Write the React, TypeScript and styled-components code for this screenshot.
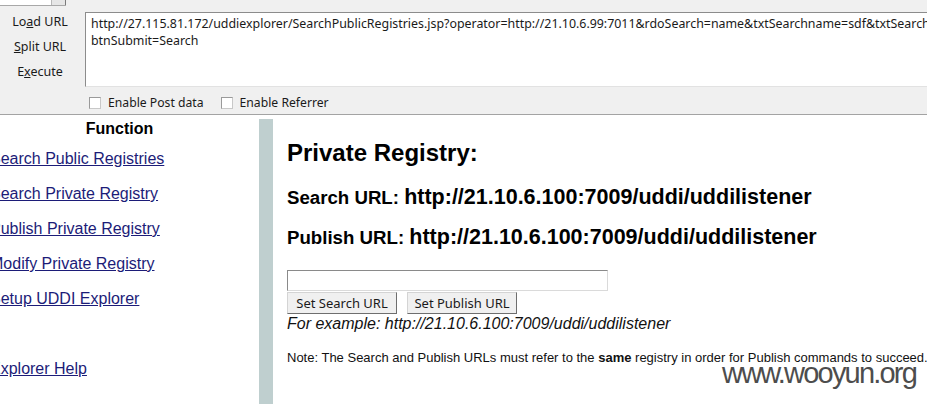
import React from "react";
import styled, { createGlobalStyle } from "styled-components";

const GlobalStyle = createGlobalStyle`
  html, body { margin: 0; padding: 0; }
  body {
    width: 927px;
    height: 404px;
    overflow: hidden;
    background: #ffffff;
    font-family: "Liberation Sans", Arial, sans-serif;
  }
  #root { width: 927px; height: 404px; }
`;

const Page = styled.div`
  position: relative;
  width: 927px;
  height: 404px;
  overflow: hidden;
  display: flex;
  flex-direction: column;
  background: #fff;
`;

const Toolbar = styled.div`
  height: 114px;
  flex: 0 0 auto;
  display: flex;
  background: #f0f0f0;
  border-bottom: 1px solid #a3a3a3;
  font-family: "Noto Sans", "Liberation Sans", sans-serif;
  color: #1a1a1a;
`;

const ActionCol = styled.div`
  width: 80px;
  flex: 0 0 80px;
  display: flex;
  flex-direction: column;
`;

const TopCombo = styled.div`
  width: 66px;
  height: 5px;
  background: #ffffff;
  border-bottom: 1px solid #a8a8a8;
  display: flex;
  justify-content: flex-end;
`;

const ComboButton = styled.div`
  width: 15px;
  height: 5px;
  background: #e6e6e6;
  border-left: 1px solid #b8b8b8;
  border-right: 1px solid #7a7a7a;
  box-sizing: border-box;
`;

const ActionList = styled.div`
  margin-top: 3px;
  display: flex;
  flex-direction: column;
`;

const ActionButton = styled.div`
  height: 25px;
  line-height: 25px;
  font-size: 12.5px;
  text-align: center;
  white-space: nowrap;
`;

const Accel = styled.span`
  text-decoration: underline;
`;

const EditorCol = styled.div`
  flex: 1 1 auto;
  margin-left: 5px;
  padding-top: 12px;
  display: flex;
  flex-direction: column;
  min-width: 0;
`;

const UrlBox = styled.textarea`
  display: block;
  box-sizing: border-box;
  width: 100%;
  height: 75px;
  margin: 0;
  padding: 2px 0 0 5px;
  border: 1px solid #8c8c8c;
  border-right: none;
  border-bottom-color: #e2e2e2;
  background: #ffffff;
  font-family: "Noto Sans", "Liberation Sans", sans-serif;
  font-size: 12.4px;
  line-height: 17px;
  color: #1a1a1a;
  white-space: pre;
  overflow: hidden;
  resize: none;
  outline: none;
`;

const CheckRow = styled.div`
  height: 27px;
  padding-top: 4px;
  box-sizing: border-box;
  display: flex;
  align-items: center;
  padding-left: 4px;
  gap: 17px;
  font-size: 12.2px;
`;

const CheckItem = styled.label`
  display: flex;
  align-items: center;
  gap: 7px;
  white-space: nowrap;
`;

const CheckBox = styled.span`
  width: 12px;
  height: 12px;
  box-sizing: border-box;
  background: #ffffff;
  border: 1px solid #9a9a9a;
  border-right-color: #c8c8c8;
  border-bottom-color: #c8c8c8;
`;

const Spacer = styled.div`
  height: 4px;
  flex: 0 0 auto;
`;

const Frames = styled.div`
  flex: 1 1 auto;
  display: flex;
  min-height: 0;
`;

const LeftFrame = styled.div`
  width: 259px;
  flex: 0 0 259px;
  overflow: hidden;
`;

const LeftInner = styled.div`
  width: 259px;
  margin-left: -10px;
`;

const FuncTitle = styled.div`
  font-weight: bold;
  font-size: 16px;
  line-height: 20px;
  text-align: center;
  color: #000;
`;

const LinkList = styled.div`
  margin-top: 2px;
  display: flex;
  flex-direction: column;
`;

const NavItem = styled.div`
  height: 35px;
  line-height: 35px;
  font-size: 16px;
  white-space: nowrap;
`;

const NavLink = styled.a`
  color: #1c1c78;
  text-decoration: underline;
  cursor: pointer;
`;

const Splitter = styled.div`
  width: 14px;
  flex: 0 0 14px;
  background: #bfcfcf;
`;

const RightFrame = styled.div`
  flex: 1 1 auto;
  min-width: 0;
  padding-left: 14px;
  overflow: hidden;
  color: #000;
`;

const Heading = styled.div`
  margin-top: 20px;
  font-size: 24px;
  font-weight: bold;
  line-height: 28px;
  white-space: nowrap;
`;

const UrlLine = styled.div<{ $first?: boolean }>`
  margin-top: ${(p) => (p.$first ? "18px" : "15px")};
  font-weight: bold;
  font-size: 21.5px;
  line-height: 25px;
  white-space: nowrap;
`;

const UrlLabel = styled.span`
  font-size: 18.67px;
`;

const UrlInput = styled.input`
  display: block;
  box-sizing: border-box;
  margin: 20px 0 0 0;
  width: 321px;
  height: 21px;
  padding: 0 2px;
  border: 1px solid #8a8a8a;
  border-right-color: #dadada;
  border-bottom-color: #dadada;
  background: #fff;
  outline: none;
`;

const ButtonRow = styled.div`
  margin-top: 1px;
  display: flex;
  gap: 10px;
`;

const FormButton = styled.button`
  box-sizing: border-box;
  width: 110px;
  height: 22px;
  margin: 0;
  padding: 0;
  background: #f0f0f0;
  border: 1px solid #d4d4d4;
  border-right-color: #6e6e6e;
  border-bottom-color: #6e6e6e;
  font-family: "Noto Sans", "Liberation Sans", sans-serif;
  font-size: 13px;
  line-height: 20px;
  color: #1a1a1a;
`;

const Example = styled.div`
  margin-top: 1px;
  font-style: italic;
  font-size: 16px;
  line-height: 18px;
  white-space: nowrap;
  color: #111;
`;

const Note = styled.div`
  margin-top: 17px;
  font-size: 13px;
  line-height: 15px;
  white-space: nowrap;
  color: #111;
`;

const Watermark = styled.div`
  position: absolute;
  left: 722px;
  top: 359px;
  font-family: "Liberation Sans", Arial, sans-serif;
  font-size: 29px;
  line-height: 29px;
  letter-spacing: -1.8px;
  color: #4d4d4d;
  white-space: nowrap;
  pointer-events: none;
`;

const requestText =
  "http://27.115.81.172/uddiexplorer/SearchPublicRegistries.jsp?operator=http://21.10.6.99:7011&rdoSearch=name&txtSearchname=sdf&txtSearchkey=&txtSearchfor=&selfor=Business+location&\nbtnSubmit=Search";

const navItems: (string | null)[] = [
  "Search Public Registries",
  "Search Private Registry",
  "Publish Private Registry",
  "Modify Private Registry",
  "Setup UDDI Explorer",
  null,
  "Explorer Help",
];

export default function App() {
  return (
    <>
      <GlobalStyle />
      <Page>
        <Toolbar>
          <ActionCol>
            <TopCombo>
              <ComboButton />
            </TopCombo>
            <ActionList>
              <ActionButton>
                Lo<Accel>a</Accel>d URL
              </ActionButton>
              <ActionButton>
                <Accel>S</Accel>plit URL
              </ActionButton>
              <ActionButton>
                E<Accel>x</Accel>ecute
              </ActionButton>
            </ActionList>
          </ActionCol>
          <EditorCol>
            <UrlBox readOnly wrap="off" value={requestText} />
            <CheckRow>
              <CheckItem>
                <CheckBox />
                Enable Post data
              </CheckItem>
              <CheckItem>
                <CheckBox />
                Enable Referrer
              </CheckItem>
            </CheckRow>
          </EditorCol>
        </Toolbar>
        <Spacer />
        <Frames>
          <LeftFrame>
            <LeftInner>
              <FuncTitle>Function</FuncTitle>
              <LinkList>
                {navItems.map((item, i) => (
                  <NavItem key={i}>{item && <NavLink>{item}</NavLink>}</NavItem>
                ))}
              </LinkList>
            </LeftInner>
          </LeftFrame>
          <Splitter />
          <RightFrame>
            <Heading>Private Registry:</Heading>
            <UrlLine $first>
              <UrlLabel>Search URL: </UrlLabel>
              http://21.10.6.100:7009/uddi/uddilistener
            </UrlLine>
            <UrlLine>
              <UrlLabel>Publish URL: </UrlLabel>
              http://21.10.6.100:7009/uddi/uddilistener
            </UrlLine>
            <UrlInput type="text" defaultValue="" />
            <ButtonRow>
              <FormButton>Set Search URL</FormButton>
              <FormButton>Set Publish URL</FormButton>
            </ButtonRow>
            <Example>For example: http://21.10.6.100:7009/uddi/uddilistener</Example>
            <Note>
              Note: The Search and Publish URLs must refer to the <b>same</b> registry in order for
              Publish commands to succeed.
            </Note>
          </RightFrame>
        </Frames>
        <Watermark>www.wooyun.org</Watermark>
      </Page>
    </>
  );
}
